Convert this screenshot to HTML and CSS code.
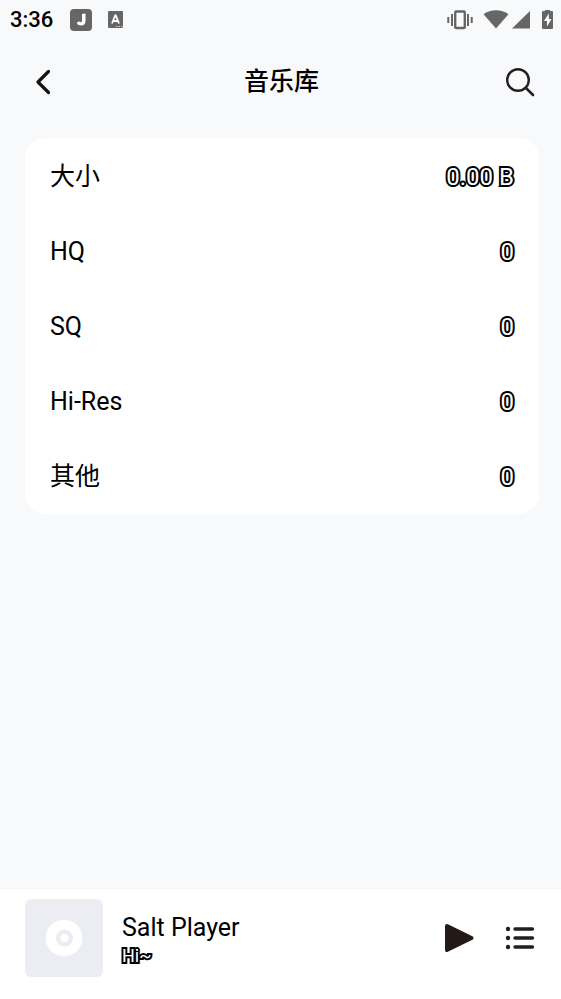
FILE: index.html
```html
<!DOCTYPE html>
<html lang="zh-CN">
<head>
<meta charset="utf-8">
<meta name="viewport" content="width=device-width, initial-scale=1">
<title>音乐库</title>
<link rel="stylesheet" href="styles.css">
</head>
<body>
<div class="status">
  <span class="clock">3:36</span>
  <svg class="app-icon" width="22" height="22" viewBox="0 0 22 22" aria-hidden="true"><rect width="22" height="22" rx="4" fill="#666"/><path d="M12 5l3.500-.5v7.500c0 3-1.800 4.500-4.500 4.500-2 0-3.500-.8-4.300-2.500l2.300-1.800c.5.700 1 1 1.700 1 1 0 1.300-.7 1.300-1.700z" fill="#fff"/></svg>
  <svg class="lang-icon" width="16" height="18" viewBox="0 0 16 18" aria-hidden="true"><rect width="15" height="17" rx="1" fill="#666"/><path d="M4 12.500L7.200 4.500h.6l3.200 8M5.200 10h5" fill="none" stroke="#fff" stroke-width="1.800"/><path d="M8 15.500h1.500m1 0h1.500m1 0h1.500" stroke="#ccc" stroke-width="1"/></svg>
  <div class="system">
    <svg width="26" height="20" viewBox="0 0 26 20" aria-hidden="true"><rect x="8.200" y="1.500" width="9.600" height="16.500" rx="1" fill="none" stroke="#666" stroke-width="2.400"/><path d="M5 4v12M21 4v12M1.300 7v6M24.700 7v6" stroke="#666" stroke-width="2"/></svg>
    <svg class="wifi" width="26" height="20" viewBox="0 0 26 20" aria-hidden="true"><path d="M.5 4.200C7.500-1.200 18.500-1.200 25.500 4.200L13 18.500z" fill="#666"/></svg>
    <svg class="cell" width="18" height="20" viewBox="0 0 18 20" aria-hidden="true"><path d="M18 1v17.500H0z" fill="#666"/></svg>
    <svg class="battery" width="11" height="20" viewBox="0 0 11 20" aria-hidden="true"><path d="M3 0h5v1h2q1 0 1 1v16q0 1-1 1H1q-1 0-1-1V2q0-1 1-1h2z" fill="#666"/><path d="M6.800 3.500L2 11h3v5.500L9.500 9H6.800z" fill="#fff"/></svg>
  </div>
</div>
<header class="bar">
  <button class="icon-button" aria-label="返回"><svg width="36" height="36" viewBox="0 0 36 36"><path d="M23.500 7.500L13 18l10.500 10.500" fill="none" stroke="#171313" stroke-width="3.200" stroke-linecap="round" stroke-linejoin="round"/></svg></button>
  <h1>音乐库</h1>
  <button class="icon-button" aria-label="搜索"><svg width="36" height="36" viewBox="0 0 36 36"><circle cx="16" cy="16" r="10.800" fill="none" stroke="#231f20" stroke-width="2.400"/><path d="M24 24l7 7" stroke="#231f20" stroke-width="2.600" stroke-linecap="round"/></svg></button>
</header>
<main>
  <dl class="card">
    <div class="row"><dt>大小</dt><dd class="outlined">0.00 B</dd></div>
    <div class="row"><dt>HQ</dt><dd class="outlined">0</dd></div>
    <div class="row"><dt>SQ</dt><dd class="outlined">0</dd></div>
    <div class="row"><dt>Hi-Res</dt><dd class="outlined">0</dd></div>
    <div class="row"><dt>其他</dt><dd class="outlined">0</dd></div>
  </dl>
</main>
<footer class="player">
  <svg class="cover" width="78" height="78" viewBox="0 0 78 78" aria-hidden="true"><rect width="78" height="78" rx="6" fill="#ecedf2"/><circle cx="39" cy="39" r="18.300" fill="#fff"/><circle cx="39.500" cy="39" r="6.300" fill="none" stroke="#ecedf2" stroke-width="4.500"/></svg>
  <div class="track">
    <div class="name">Salt Player</div>
    <div class="artist outlined">Hi~</div>
  </div>
  <button class="icon-button" aria-label="播放"><svg width="36" height="36" viewBox="0 0 36 36"><path d="M6 6L30.500 18 6 30z" fill="#231a18" stroke="#231a18" stroke-width="4" stroke-linejoin="round"/></svg></button>
  <button class="icon-button" aria-label="播放列表"><svg width="36" height="36" viewBox="0 0 36 36"><path d="M13 9h17.500M13 18h17.500M13 27h17.500" stroke="#231f20" stroke-width="3.400" stroke-linecap="round"/><g fill="#231f20"><circle cx="6" cy="9" r="2.200"/><circle cx="6" cy="18" r="2.200"/><circle cx="6" cy="27" r="2.200"/></g></svg></button>
</footer>
</body>
</html>
```
FILE: styles.css
```css
* { box-sizing: border-box; }

body {
  margin: 0;
  min-height: 100vh;
  display: flex;
  flex-direction: column;
  background: #f8f9fb;
  color: #000;
  font-family: Roboto, "Noto Sans CJK SC", sans-serif;
  font-size: 25px;
  line-height: 32px;
}

svg { display: block; }

.status {
  display: flex;
  align-items: center;
  height: 40px;
  padding: 0 8px 0 10px;
}

.clock {
  font-size: 22px;
  font-weight: 500;
}

.app-icon { margin-left: 17px; }
.lang-icon { margin-left: 16px; }

.system {
  display: flex;
  align-items: center;
  margin-left: auto;
}

.wifi { margin-left: 10px; }
.cell { margin-left: 3px; }
.battery { margin-left: 12px; }

.bar {
  display: flex;
  align-items: center;
  justify-content: space-between;
  height: 84px;
  padding: 0 23px 0 25px;
}

h1 {
  margin: 0;
  font-size: 25px;
  font-weight: 500;
}

.icon-button {
  flex: none;
  padding: 0;
  border: 0;
  background: none;
}

main {
  flex: 1;
  padding: 14px 22px 24px 25px;
}

.card {
  margin: 0;
  padding-top: 1px;
  border-radius: 20px;
  background: #fff;
}

.row {
  display: flex;
  align-items: center;
  justify-content: space-between;
  height: 75px;
  padding: 0 25px;
}

dd { margin: 0; }

.outlined {
  color: #fff;
  font-size: 24px;
  -webkit-text-stroke: 4px #000;
  paint-order: stroke fill;
}

.player {
  display: flex;
  align-items: center;
  gap: 25px;
  padding: 10px 23px 22px 25px;
  border-top: 1px solid #f2f3f5;
  background: #fff;
}

.track {
  flex: 1;
  margin-left: -6px;
  padding-top: 4px;
}

.artist {
  font-size: 18px;
  line-height: 24px;
}
```
